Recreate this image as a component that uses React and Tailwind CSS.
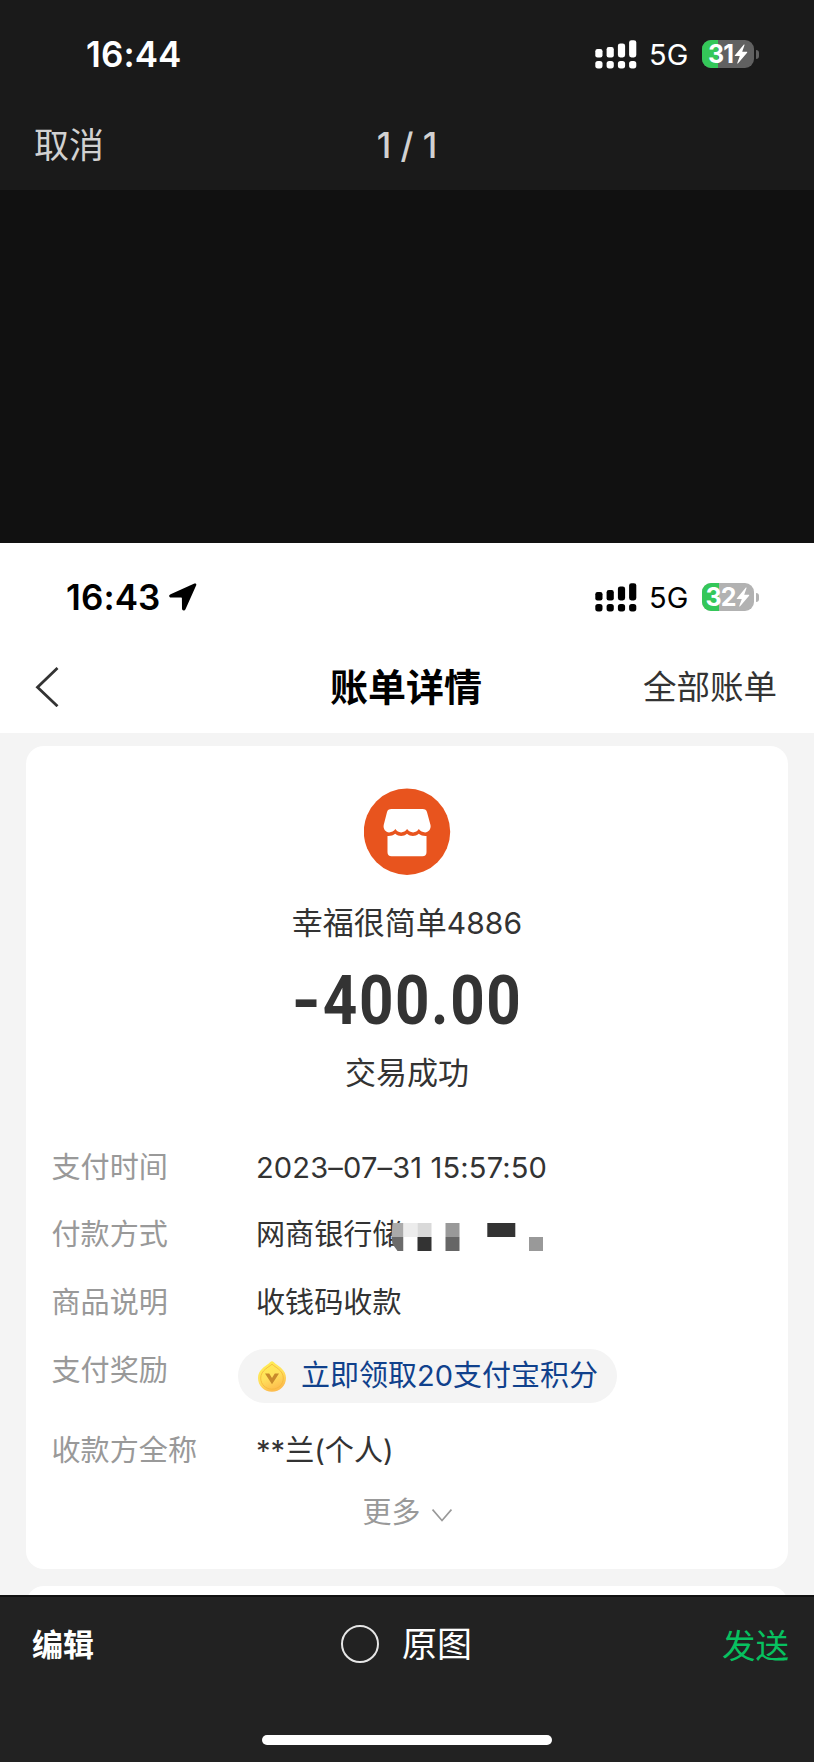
import clsx from "clsx"

// four bars on top of four dots, dual sim style
function Signal() {
  return (
    <svg width="42" height="29" viewBox="0 0 42 29" fill="currentColor">
      <rect x="0.3" y="9" width="7.2" height="8.4" rx="2.2" />
      <rect x="11.6" y="7" width="7.2" height="10.4" rx="2.2" />
      <rect x="22.9" y="3.4" width="7.2" height="14" rx="2.4" />
      <rect x="34.1" y="0.2" width="7.2" height="17.2" rx="2.4" />
      {[0.3, 11.6, 22.9, 34.1].map((x) => (
        <rect key={x} x={x} y="21" width="7.2" height="7.4" rx="2.6" />
      ))}
    </svg>
  )
}

function Battery({ level, dark }) {
  return (
    <div className="flex items-center gap-[2px]">
      <div className={clsx("relative flex h-[28px] w-[52px] items-center justify-center gap-px overflow-hidden rounded-[9px] text-white", dark ? "bg-[#616161]" : "bg-[#b2b2b2]")}>
        <div className="absolute inset-y-0 left-0 bg-[#34c759]" style={{ width: `${level}%` }} />
        <span className="relative text-[25px] leading-[28px] font-bold tracking-[-1px]">{level}</span>
        <svg className="relative" width="14" height="20" viewBox="0 0 15 20" preserveAspectRatio="none" fill="currentColor">
          <path d="M10.6.6 1 11.2c-.4.5-.2.9.4.9h4.8L3.5 19c-.2.6.3.8.7.4L14 8.7c.4-.5.2-.9-.4-.9H8.8l2.5-6.8c.2-.6-.3-.8-.7-.4Z" />
        </svg>
      </div>
      <div className={clsx("h-[9px] w-[3px] rounded-r-full", dark ? "bg-[#616161]" : "bg-[#b2b2b2]")} />
    </div>
  )
}

function StatusBar({ time, level, dark, located }) {
  return (
    <div className={clsx("flex h-[108px] items-center justify-between pr-[55px]", dark ? "pl-[86px] text-white" : "pl-[66px] text-black")}>
      <div className="flex items-center gap-[9px]">
        <span className="text-[35px] leading-[40px] font-semibold tracking-[0.1px]">{time}</span>
        {located && (
          <svg width="28" height="28" viewBox="0 0 28 28" fill="currentColor">
            <path d="M25.4.6 1.6 11.2C-.6 12.2-.1 14.6 2 14.6h10.2c.5 0 .7.2.7.7l.1 10.3c0 2.3 2.6 2.7 3.5.6L27.1 2.6C27.8 1 26.8 0 25.4.6Z" />
          </svg>
        )}
      </div>
      <div className="flex items-center">
        <Signal />
        <span className="mt-[2px] ml-[12px] w-[53px] text-[29px] leading-[32px]">5G</span>
        <Battery level={level} dark={dark} />
      </div>
    </div>
  )
}

function ShopIcon() {
  return (
    <svg width="87" height="87" viewBox="0 0 87 87">
      <circle cx="43" cy="43.7" r="43.2" fill="#e8541e" />
      <path fill="#fff" d="M27.5 21h31c2.500 0 4 1 4.600 3.400l3.400 12.600c.8 4-2 7.400-5.400 7.400-2.600 0-4.600-1-6.300-3.300-1.500 2.300-3.300 3.300-5.700 3.300s-4.400-1-6-3.300c-1.600 2.300-3.600 3.300-6 3.300s-4.200-1-5.700-3.300c-1.700 2.300-3.700 3.300-6.300 3.300-3.400 0-6.200-3.400-5.400-7.400l3.200-12.600c.6-2.400 2.100-3.400 4.600-3.400Z" />
      <path fill="#fff" d="M23.5 48c3.200.2 5.400-.5 7.700-2.200 3.600 2.900 8.300 2.900 11.800 0 3.500 2.900 8.200 2.900 11.800 0 2.300 1.700 4.500 2.400 7.700 2.200v16.300c0 2.500-1.500 4-4 4h-31c-2.500 0-4-1.500-4-4Z" />
    </svg>
  )
}

function PointsIcon() {
  return (
    <svg width="28" height="31" viewBox="0 0 28 31">
      <defs>
        <linearGradient id="drop" x1="0" y1="0" x2="0.4" y2="1">
          <stop offset="0" stopColor="#fff04f" />
          <stop offset="0.6" stopColor="#ffe05c" />
          <stop offset="1" stopColor="#fdbd4e" />
        </linearGradient>
      </defs>
      <path d="M14 .3c1.200 0 2 1.200 3.500 2.400C21 5.400 28 9 28 17c0 7.800-6.200 13.700-14 13.700S0 24.800 0 17C0 9 7 5.400 10.500 2.700 12 1.500 12.800.3 14 .3Z" fill="url(#drop)" />
      <path d="M14 3.200c3 3 11.300 6 11.300 13.900C25.300 23.400 20.300 28.200 14 28.200S2.700 23.400 2.700 17.100C2.700 9.200 11 6.200 14 3.200Z" fill="none" stroke="#f5b93c" strokeWidth="0.9" />
      <path d="M7 12.500h4.200L14 17l2.800-4.500H21L14 23.300Z" fill="#c98a2b" />
    </svg>
  )
}

// pixelated patch that hides the end of the bank name
const mosaic = [
  [24.5, 0, 14, "#ececec"],
  [38.5, 0, 14, "#d9d9d9"],
  [66.5, 0, 14, "#999"],
  [108.3, 0, 28, "#333"],
  [24.5, 14, 14, "#fff"],
  [38.5, 14, 14, "#333"],
  [66.5, 14, 14, "#666"],
  [150, 14, 14, "#999"],
]

function Mosaic() {
  return (
    <svg className="absolute top-[16px] left-[123px]" width="166" height="28" viewBox="0 0 166 28">
      <path d="M13.5 0h11v14h-12Z" fill="#aaa" />
      <path d="M12.5 14h12v14h-6l-5-7Z" fill="#6b6b6b" />
      {mosaic.map(([x, y, w, fill]) => (
        <rect key={`${x}-${y}`} x={x} y={y} width={w} height="14" fill={fill} />
      ))}
    </svg>
  )
}

function Row({ label, className, children }) {
  return (
    <div className={clsx("flex items-start", className)}>
      <span className="w-[204.5px] shrink-0 text-[#999]">{label}</span>
      <span className="relative text-[#333]">{children}</span>
    </div>
  )
}

export default function App() {
  return (
    <div className="flex h-[1762px] w-[814px] flex-col overflow-hidden bg-[#111] font-['Inter','Noto_Sans_CJK_SC',sans-serif]">

      {/* Picker header */}
      <header className="h-[190px] shrink-0 bg-[#1a1a1a]">
        <StatusBar time="16:44" level={31} dark />
        <div className="grid h-[75px] grid-cols-3 items-center px-[34px] text-[35px] text-[#d1d1d1]">
          <span>取消</span>
          <span className="text-center font-medium">1 / 1</span>
        </div>
      </header>

      {/* Selected picture */}
      <main className="mt-[353px] h-[1052px] shrink-0 overflow-hidden bg-[#f4f4f4]">
        <div className="h-[190px] bg-white">
          <StatusBar time="16:43" level={32} located />
          <div className="grid h-[72px] grid-cols-3 items-center pr-[37px] pl-[35px]">
            <svg width="24" height="40" viewBox="0 0 24 40" fill="none" stroke="#333" strokeWidth="2.8">
              <path d="M22.5 1 2.500 20.200l20 19" />
            </svg>
            <span className="text-center text-[38px] leading-[44px] font-bold text-black">账单详情</span>
            <span className="text-right text-[33.5px] leading-[40px] text-[#333]">全部账单</span>
          </div>
        </div>

        <section className="mx-[26px] mt-[13px] h-[823px] rounded-[18px] bg-white px-[25.5px]">
          <div className="flex flex-col items-center pt-[42px] text-[31px] text-[#333]">
            <ShopIcon />
            <p className="mt-[26px] leading-[44px]">幸福很简单<span className="text-[30px] tracking-[0.1px]">4886</span></p>
            <p className="mt-[20px] ml-[3px] scale-x-[.885] font-['Roboto'] text-[68px] leading-[72px] font-bold tracking-[1.8px]">
              <span className="mr-[3px] inline-block scale-x-125">-</span>400.00
            </p>
            <p className="mt-[14px] leading-[44px]">交易成功</p>
          </div>

          <div className="mt-[45px] text-[29.1px] leading-[56px]">
            <Row label="支付时间" className="h-[67px]">
              <span className="tracking-[0.13px]">2023–07–31 15:57:50</span>
            </Row>
            <Row label="付款方式" className="h-[68px]">
              网商银行储
              <Mosaic />
            </Row>
            <Row label="商品说明" className="h-[68px]">收钱码收款</Row>
            <Row label="支付奖励" className="h-[80px]">
              <span className="mt-[6px] -ml-[18px] flex h-[54px] w-[379px] items-center gap-[15px] rounded-full bg-[#f4f4f4] pl-[20px] text-[29px] whitespace-nowrap text-[#10418c]">
                <PointsIcon />
                立即领取20支付宝积分
              </span>
            </Row>
            <Row label="收款方全称" className="h-[62px]">**兰(个人)</Row>
            <div className="flex items-center justify-center gap-[11px] text-[29px] text-[#999]">
              更多
              <svg className="mt-[5px]" width="20" height="13" viewBox="0 0 20 13" fill="none" stroke="#999" strokeWidth="1.6">
                <path d="m.6.6 9.400 11L19.400.6" />
              </svg>
            </div>
          </div>
        </section>

        <section className="mx-[26px] mt-[17px] h-[60px] rounded-[18px] bg-white" />
      </main>

      {/* Toolbar */}
      <footer className="mt-[2px] flex flex-1 flex-col items-center bg-[#222]">
        <div className="grid h-[96px] w-full grid-cols-3 items-center pr-[25px] pl-[32px]">
          <span className="text-[31px] font-bold text-white">编辑</span>
          <div className="flex items-center justify-center gap-[23px] pr-[8px] pb-[2px] text-[35px] text-white">
            <span className="size-[38px] rounded-full border-2 border-[#e6e6e6]" />
            原图
          </div>
          <span className="pt-[2px] text-right text-[33.5px] text-[#07c160]">发送</span>
        </div>
        <div className="mt-[42px] h-[10px] w-[290px] rounded-full bg-white" />
      </footer>

    </div>
  )
}
